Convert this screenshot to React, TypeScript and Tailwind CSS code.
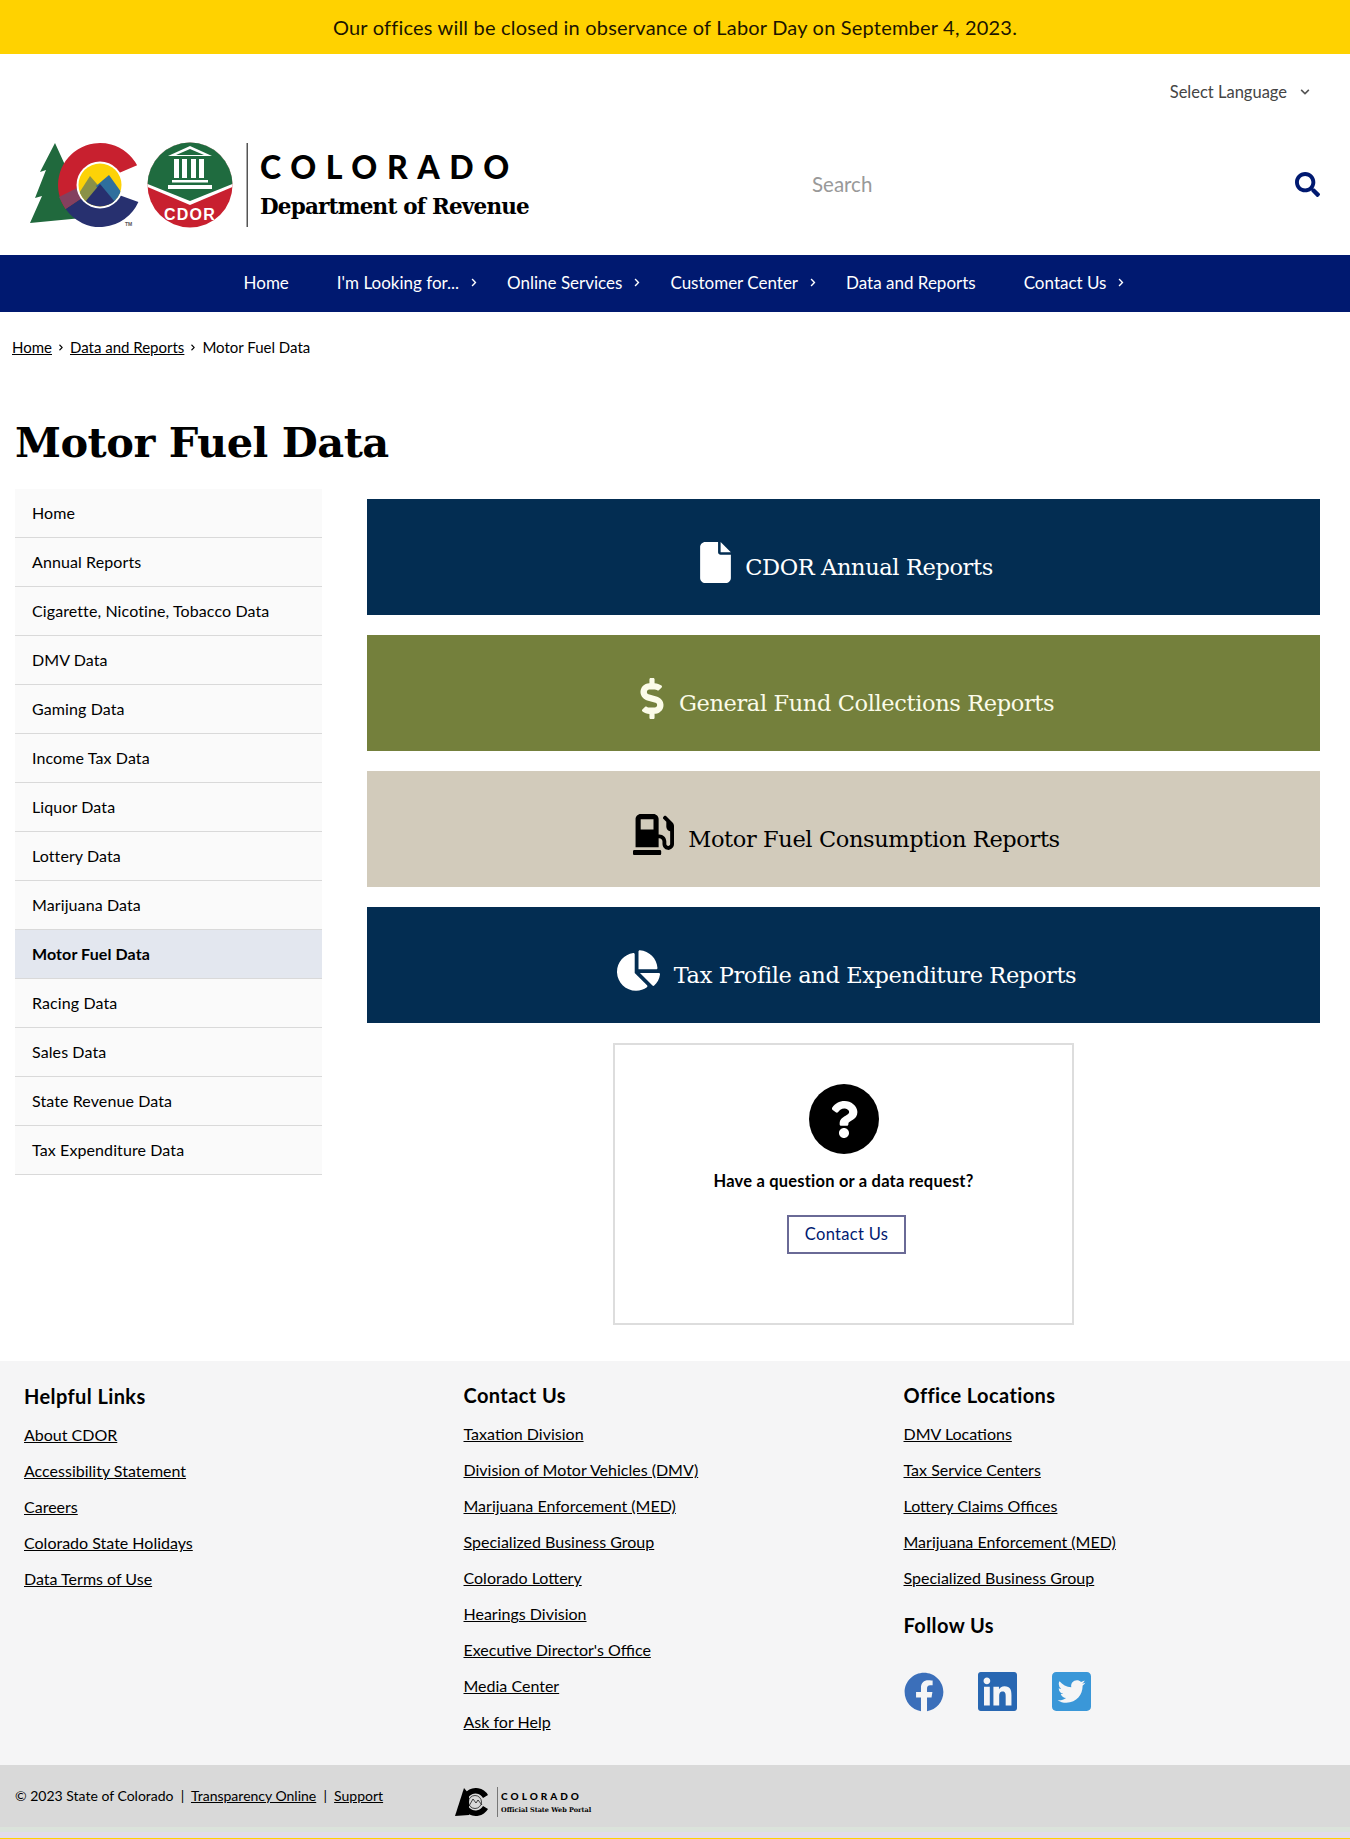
import React from "react";
import { FaDollarSign, FaGasPump, FaChartPie, FaSearch, FaQuestion, FaFacebook, FaLinkedin, FaTwitterSquare, FaChevronRight, FaChevronDown } from "react-icons/fa";
import { FaFile } from "react-icons/fa6";

const side = ["Home","Annual Reports","Cigarette, Nicotine, Tobacco Data","DMV Data","Gaming Data","Income Tax Data","Liquor Data","Lottery Data","Marijuana Data","Motor Fuel Data","Racing Data","Sales Data","State Revenue Data","Tax Expenditure Data"];
const nav: [string, boolean][] = [["Home",false],["I'm Looking for...",true],["Online Services",true],["Customer Center",true],["Data and Reports",false],["Contact Us",true]];
const helpful = ["About CDOR","Accessibility Statement","Careers","Colorado State Holidays","Data Terms of Use"];
const contact = ["Taxation Division","Division of Motor Vehicles (DMV)","Marijuana Enforcement (MED)","Specialized Business Group","Colorado Lottery","Hearings Division","Executive Director's Office","Media Center","Ask for Help"];
const offices = ["DMV Locations","Tax Service Centers","Lottery Claims Offices","Marijuana Enforcement (MED)","Specialized Business Group"];

function Logo() {
  return (
    <svg width="240" height="110" viewBox="0 0 240 110" className="shrink-0">
      <polygon points="35,13 20,42 26,40 15,68 22,66 10,93 62,88 62,40 45,35" fill="#20693d" />
      <path d="M117.1,35.3 A42,42 0 1 0 45.6,79.1 L62,68 L80,55 L99,43 Z" fill="#c8202f" />
      <path d="M45.6,79.1 A42,42 0 0 0 118.4,72.1 L99,65 L80,55 L62,68 Z" fill="#27306f" />
      <polygon points="45.6,79.1 62,68 57,58 39,67" fill="#84405f" />
      <circle cx="80" cy="55" r="23.5" fill="#fff" />
      <clipPath id="lc"><circle cx="80" cy="55" r="21.5" /></clipPath>
      <g clipPath="url(#lc)">
        <rect x="55" y="30" width="50" height="50" fill="#fdd207" />
        <polygon points="56,68 70,46 84,62 70,80" fill="#8a9147" />
        <polygon points="76,56 89,45 104,66 92,80" fill="#2f6f9d" />
        <polygon points="60,78 80,54 100,78" fill="#27306f" />
      </g>
      <text x="105" y="96" fontSize="5" fontFamily="Liberation Sans, sans-serif" fontWeight="700" fill="#555">TM</text>
      <clipPath id="cd"><circle cx="170" cy="55" r="42.5" /></clipPath>
      <g clipPath="url(#cd)">
        <rect x="125" y="10" width="90" height="90" fill="#c8202f" />
        <polygon points="125,10 215,10 215,56 170,75 125,56" fill="#fff" />
        <polygon points="125,10 215,10 215,53 170,71 125,53" fill="#1f6b3f" />
        <polygon points="170,16 192,26 148,26" fill="#fff" />
        <polygon points="170,19 184,25 156,25" fill="#1f6b3f" />
        <rect x="154" y="29" width="5" height="19" fill="#fff" />
        <rect x="162" y="29" width="5" height="19" fill="#fff" />
        <rect x="171" y="29" width="5" height="19" fill="#fff" />
        <rect x="179" y="29" width="5" height="19" fill="#fff" />
        <rect x="152" y="50" width="36" height="2.5" fill="#fff" />
        <rect x="148" y="55" width="44" height="4" fill="#fff" />
        <text x="170" y="90" textAnchor="middle" fontSize="16" fontWeight="700" letterSpacing="1.2" fontFamily="Liberation Sans, sans-serif" fill="#fff">CDOR</text>
      </g>
      <rect x="226.5" y="13" width="1.5" height="84" fill="#555" />
    </svg>
  );
}

function Card({ bg, fg, icon, label }: { bg: string; fg: string; icon: React.ReactNode; label: string }) {
  return (
    <div className={`h-[116px] flex items-end justify-center gap-[14px] pb-[32px] pl-[6px] ${bg} ${fg}`}>
      {icon}
      <span className="text-[22.5px] leading-[32px] font-['DejaVu_Serif',serif] tracking-[-0.38px]">{label}</span>
    </div>
  );
}

function FootCol({ title, links }: { title: string; links: string[] }) {
  return (
    <>
      <h3 className="text-[20px] leading-[28px] font-bold tracking-[0.4px] mb-[7px]">{title}</h3>
      <ul className="flex flex-col">
        {links.map((l) => (
          <li key={l} className="h-[36px] leading-[36px] text-[16px]"><a className="underline">{l}</a></li>
        ))}
      </ul>
    </>
  );
}

export default function App() {
  return (
    <div className="w-[1350px] h-[1839px] overflow-hidden bg-white text-black font-['Lato',sans-serif] flex flex-col">
      <div className="h-[54px] shrink-0 bg-[#ffd200] flex items-center justify-center text-[20px] tracking-[0.2px] text-[#1c1500]">
        Our offices will be closed in observance of Labor Day on September 4, 2023.
      </div>
      <header className="h-[201px] shrink-0 flex flex-col">
        <div className="h-[50px] flex items-end justify-end pr-[40px] text-[16.5px] text-[#444] gap-[13px]">
          <span className="leading-[24px]">Select Language</span>
          <FaChevronDown className="w-[10px] h-[10px] mb-[7px] text-[#555]" />
        </div>
        <div className="flex items-start pl-[20px] pr-[30px] pt-[26px]">
          <Logo />
          <div className="pt-[19px] w-[300px]">
            <div className="text-[32px] leading-[36px] font-black tracking-[9.6px]">COLORADO</div>
            <div className="text-[21.5px] leading-[32px] mt-[6px] font-bold font-['DejaVu_Serif',serif] tracking-[-0.8px] whitespace-nowrap">Department of Revenue</div>
          </div>
          <div className="flex-1 flex items-center justify-between ml-[252px] pt-[39px]">
            <span className="text-[20.5px] leading-[30px] text-[#999]">Search</span>
            <FaSearch className="w-[25px] h-[25px] text-[#001970]" />
          </div>
        </div>
      </header>
      <nav className="h-[57px] shrink-0 bg-[#001970] text-white flex items-center justify-center gap-[48px] text-[17px] pb-[1px]">
        {nav.map(([t, c]) => (
          <span key={t} className="relative whitespace-nowrap">
            {t}
            {c && <FaChevronRight className="absolute -right-[19px] top-[8px] w-[8px] h-[9px]" />}
          </span>
        ))}
      </nav>
      <div className="h-[35px] mt-[18px] pl-[12px] flex items-center gap-[6px] text-[15px]">
        <a className="underline">Home</a>
        <FaChevronRight className="w-[6px] h-[7px]" />
        <a className="underline">Data and Reports</a>
        <FaChevronRight className="w-[6px] h-[7px]" />
        <span>Motor Fuel Data</span>
      </div>
      <h1 className="pl-[15px] mt-[50px] text-[41.5px] leading-[56px] font-bold font-['DejaVu_Serif',serif] tracking-[-0.5px]">Motor Fuel Data</h1>
      <main className="flex pl-[15px] mt-[18px] h-[872px] shrink-0">
        <ul className="w-[307px] shrink-0">
          {side.map((s) => (
            <li key={s} className={`h-[49px] leading-[48px] pl-[17px] text-[16px] tracking-[0.1px] border-b border-[#d9d9d9] ${s === "Motor Fuel Data" ? "bg-[#e3e7ef] font-bold" : "bg-[#fafafa]"}`}>{s}</li>
          ))}
        </ul>
        <div className="ml-[45px] w-[953px] pt-[10px] flex flex-col gap-[20px]">
          <Card bg="bg-[#032d52]" fg="text-white" icon={<FaFile className="w-[31px] h-[41px]" />} label="CDOR Annual Reports" />
          <Card bg="bg-[#74803c]" fg="text-[#fbfbe8]" icon={<FaDollarSign className="w-[26px] h-[41px]" />} label="General Fund Collections Reports" />
          <Card bg="bg-[#d2cbbb]" fg="text-black" icon={<FaGasPump className="w-[41px] h-[41px]" />} label="Motor Fuel Consumption Reports" />
          <Card bg="bg-[#032d52]" fg="text-white" icon={<FaChartPie className="w-[43px] h-[41px]" />} label="Tax Profile and Expenditure Reports" />
          <div className="self-center w-[461px] h-[282px] border-2 border-[#ddd] flex flex-col items-center pt-[39px]">
            <div className="w-[70px] h-[70px] rounded-full bg-black flex items-center justify-center">
              <FaQuestion className="w-[28px] h-[37px] text-white" />
            </div>
            <p className="mt-[15px] text-[16.5px] leading-[24px] font-bold tracking-[0.2px]">Have a question or a data request?</p>
            <a className="mt-[22px] ml-[6px] w-[119px] h-[39px] border-2 border-[#6a6a96] flex items-center justify-center text-[16.5px] text-[#001970] tracking-[0.3px]">Contact Us</a>
          </div>
        </div>
      </main>
      <footer className="h-[404px] shrink-0 bg-[#f5f5f6] grid grid-cols-[439.5px_440px_1fr] pl-[24px] pt-[20px]">
        <div className="pt-[1px]"><FootCol title="Helpful Links" links={helpful} /></div>
        <div><FootCol title="Contact Us" links={contact} /></div>
        <div>
          <FootCol title="Office Locations" links={offices} />
          <h3 className="text-[20px] leading-[28px] font-bold tracking-[0.4px] mt-[15px]">Follow Us</h3>
          <div className="flex items-center mt-[30px]">
            <FaFacebook className="w-[40px] h-[40px] text-[#3b6fba]" />
            <FaLinkedin className="w-[39px] h-[45px] ml-[34px] text-[#2867b2]" />
            <FaTwitterSquare className="w-[39px] h-[45px] ml-[35px] text-[#3a97d8]" />
          </div>
        </div>
      </footer>
      <div className="flex-1 bg-[#d9d9d9] flex items-start pl-[15px] pt-[20px] text-[14px]">
        <span>© 2023 State of Colorado&nbsp; |&nbsp; <a className="underline">Transparency Online</a>&nbsp; |&nbsp; <a className="underline">Support</a></span>
        <div className="ml-[72px] mt-[2px] flex items-center">
          <svg width="35" height="28" viewBox="0 0 35 28">
            <polygon points="9,0 0,28 14,27 14,6" fill="#000" />
            <path d="M33,7 A14,14 0 1 0 33,21 L28,18 A8.5,8.5 0 1 1 28,10 Z" fill="#000" />
            <circle cx="20" cy="14" r="6.5" fill="none" stroke="#000" strokeWidth="0.7" />
            <path d="M14,18 L18,11 L21,15 L23,12 L27,17" fill="none" stroke="#000" strokeWidth="0.7" />
          </svg>
          <div className="ml-[7px] border-l border-[#777] pl-[3px] h-[30px] flex flex-col justify-center">
            <div className="text-[10px] leading-[15px] font-black tracking-[3px]">COLORADO</div>
            <div className="text-[6.5px] leading-[12px] font-bold font-['DejaVu_Serif',serif] whitespace-nowrap">Official State Web Portal</div>
          </div>
        </div>
      </div>
      <div className="h-[5px] shrink-0 bg-[#dbe3db]" />
      <div className="h-[6px] shrink-0 bg-[#e2dcea]" />
      <div className="h-[1px] shrink-0 bg-[#ffd200]" />
    </div>
  );
}
